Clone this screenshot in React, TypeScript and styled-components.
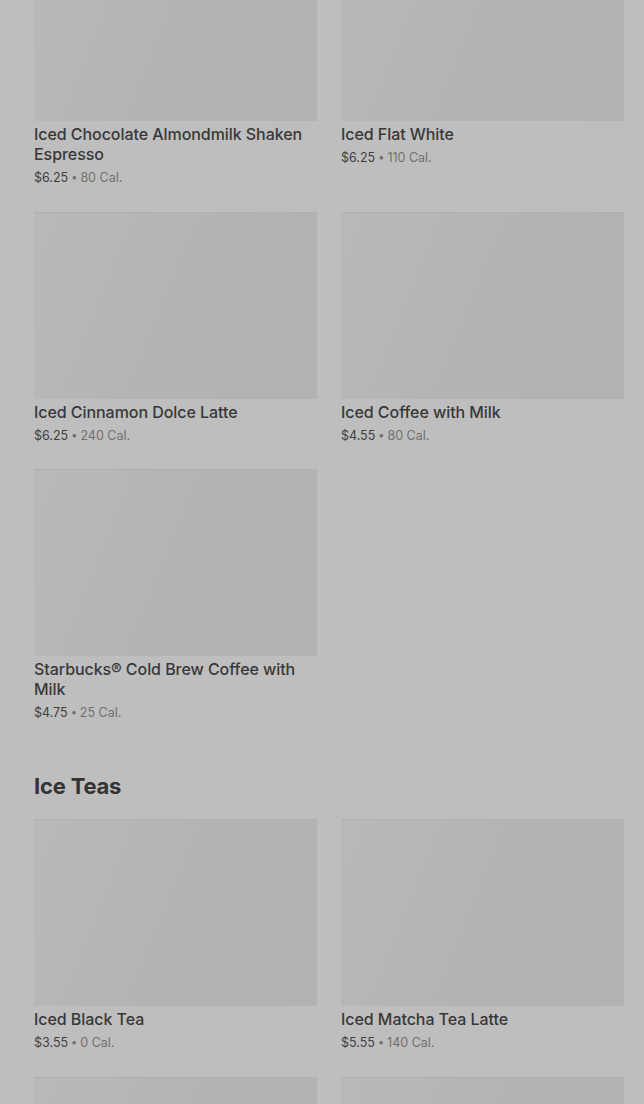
import styled, { createGlobalStyle } from 'styled-components';

interface Item {
  name: string;
  price: string;
  cal: string;
}

const coffees: Item[] = [
  { name: 'Iced Chocolate Almondmilk Shaken Espresso', price: '$6.25', cal: '80 Cal.' },
  { name: 'Iced Flat White', price: '$6.25', cal: '110 Cal.' },
  { name: 'Iced Cinnamon Dolce Latte', price: '$6.25', cal: '240 Cal.' },
  { name: 'Iced Coffee with Milk', price: '$4.55', cal: '80 Cal.' },
  { name: 'Starbucks® Cold Brew Coffee with Milk', price: '$4.75', cal: '25 Cal.' },
];

const teas: Item[] = [
  { name: 'Iced Black Tea', price: '$3.55', cal: '0 Cal.' },
  { name: 'Iced Matcha Tea Latte', price: '$5.55', cal: '140 Cal.' },
  { name: '', price: '', cal: '' },
  { name: '', price: '', cal: '' },
];

const GlobalStyle = createGlobalStyle`
  html, body {
    margin: 0;
    padding: 0;
    background: #bebebe;
    overflow: hidden;
  }
  body {
    font-family: Inter, "Noto Sans", sans-serif;
    color: #363636;
  }
`;

const Page = styled.div`
  width: 644px;
  height: 1104px;
  overflow: hidden;
  background: #bebebe;
`;

const Content = styled.div`
  padding: 0 20px 0 34px;
  margin-top: -66px;
`;

const Grid = styled.ul`
  list-style: none;
  margin: 0;
  padding: 0;
  display: grid;
  grid-template-columns: 283px 283px;
  column-gap: 24px;
  row-gap: 24.5px;
`;

const Card = styled.li`
  display: flex;
  flex-direction: column;
`;

const Thumb = styled.div`
  height: 187px;
  background: linear-gradient(112deg, #b9b9b9 0%, #b6b6b6 30%, #b3b3b3 55%, #b2b2b2 100%);
  box-shadow: inset 0 1px 0 #b0b0b0;
`;

const Name = styled.h3`
  margin: 3px 0 0;
  font-size: 16px;
  line-height: 20px;
  font-weight: 500;
  letter-spacing: -0.06px;
  color: #383838;
`;

const Meta = styled.p`
  margin: 5px 0 0;
  font-size: 12.5px;
  line-height: 18px;
  color: #404040;
`;

const Cal = styled.span`
  color: #707070;
`;

const Dot = styled.span`
  color: #707070;
  font-size: 11px;
  line-height: 1;
  vertical-align: 1px;
  margin: 0 3px;
`;

const Heading = styled.h2`
  margin: 48px 0 17px;
  font-size: 22px;
  line-height: 32px;
  font-weight: 700;
  color: #333333;
  letter-spacing: -0.2px;
`;

const MenuCard = ({ item }: { item: Item }) => (
  <Card>
    <Thumb />
    {item.name && (
      <>
        <Name>{item.name}</Name>
        <Meta>
          {item.price}
          <Dot>•</Dot>
          <Cal>{item.cal}</Cal>
        </Meta>
      </>
    )}
  </Card>
);

export default function App() {
  return (
    <Page>
      <GlobalStyle />
      <Content>
        <Grid>
          {coffees.map((c) => (
            <MenuCard key={c.name} item={c} />
          ))}
        </Grid>
        <Heading>Ice Teas</Heading>
        <Grid>
          {teas.map((t, i) => (
            <MenuCard key={i} item={t} />
          ))}
        </Grid>
      </Content>
    </Page>
  );
}
